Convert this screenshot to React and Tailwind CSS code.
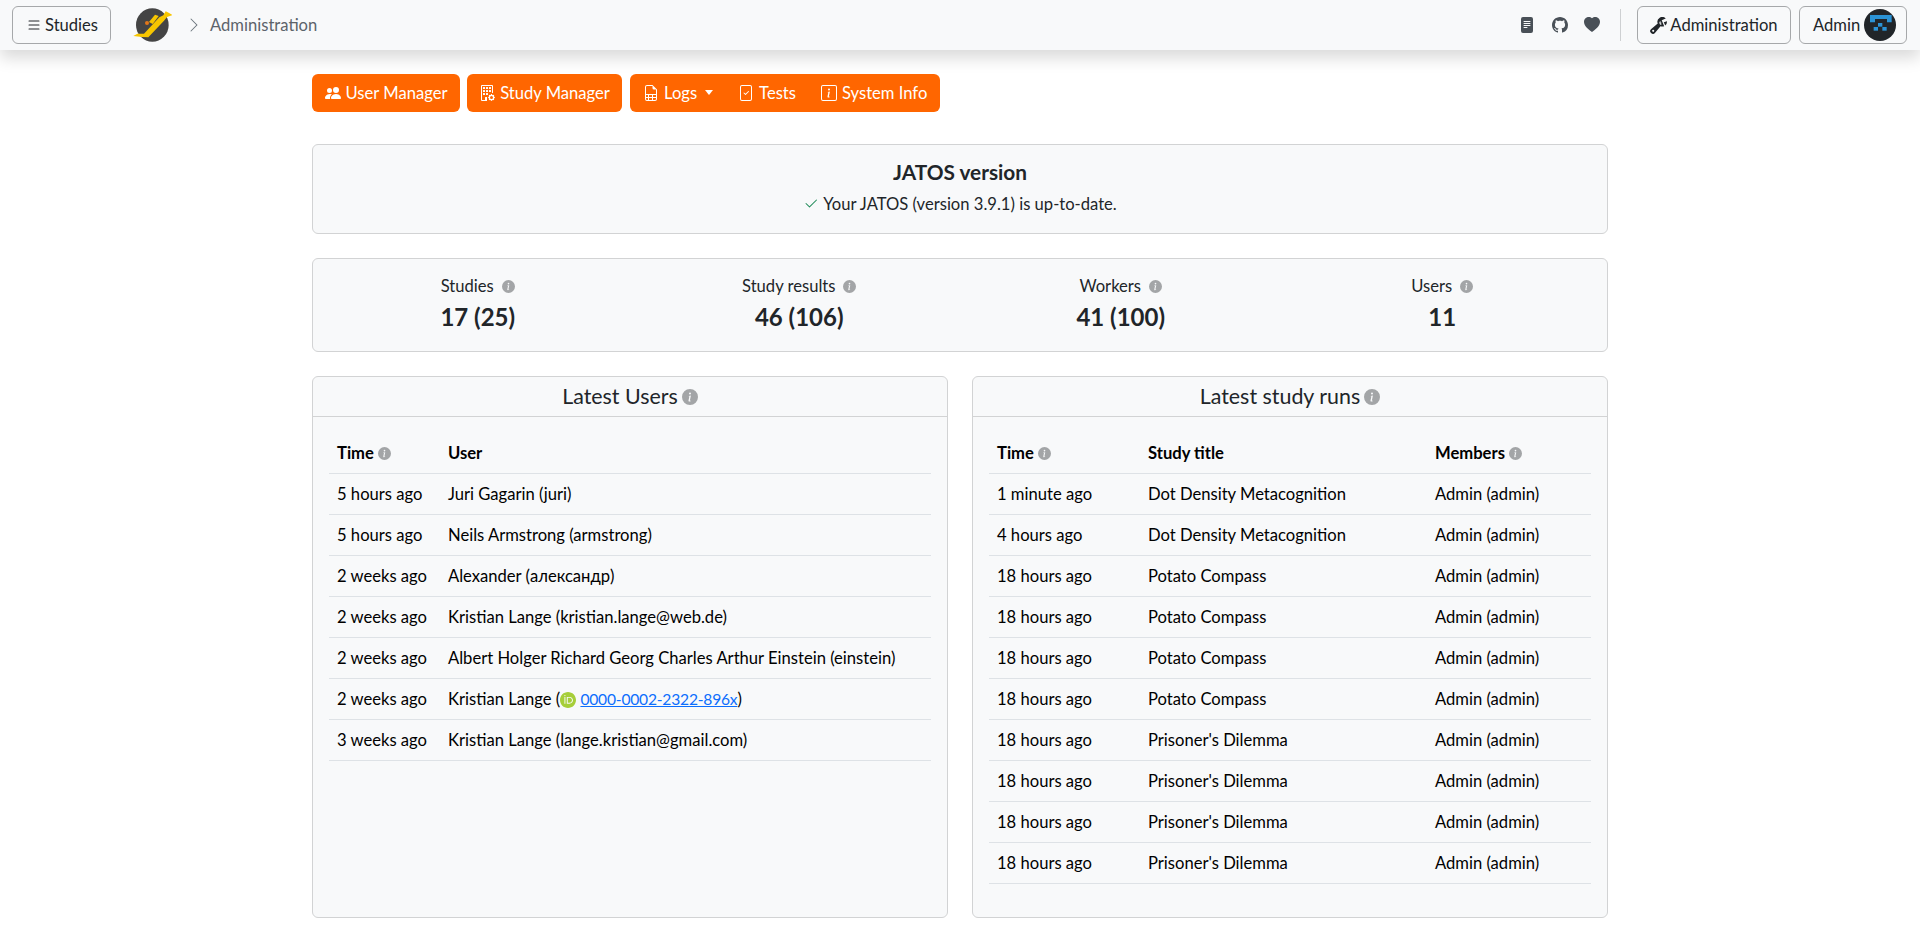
import {
  BsList,
  BsChevronRight,
  BsFileTextFill,
  BsGithub,
  BsHeartFill,
  BsWrenchAdjustable,
  BsPeopleFill,
  BsBuildingGear,
  BsFileEarmarkSpreadsheet,
  BsFileCheck,
  BsInfoSquare,
  BsCheck2,
  BsInfoCircleFill,
} from "react-icons/bs";
import { SiOrcid } from "react-icons/si";

const users = [
  ["5 hours ago", "Juri Gagarin (juri)"],
  ["5 hours ago", "Neils Armstrong (armstrong)"],
  ["2 weeks ago", "Alexander (александр)"],
  ["2 weeks ago", "Kristian Lange (kristian.lange@web.de)"],
  ["2 weeks ago", "Albert Holger Richard Georg Charles Arthur Einstein (einstein)"],
  [
    "2 weeks ago",
    <>
      Kristian Lange (
      <SiOrcid className="inline-block text-[16px] text-[#a6ce39] align-[-3px]" />{" "}
      <a href="#" className="text-[#0d6efd] underline text-[15.6px] tracking-[-0.2px]">
        0000-0002-2322-896x
      </a>
      )
    </>,
  ],
  ["3 weeks ago", "Kristian Lange (lange.kristian@gmail.com)"],
];

const runs = [
  ["1 minute ago", "Dot Density Metacognition"],
  ["4 hours ago", "Dot Density Metacognition"],
  ["18 hours ago", "Potato Compass"],
  ["18 hours ago", "Potato Compass"],
  ["18 hours ago", "Potato Compass"],
  ["18 hours ago", "Potato Compass"],
  ["18 hours ago", "Prisoner's Dilemma"],
  ["18 hours ago", "Prisoner's Dilemma"],
  ["18 hours ago", "Prisoner's Dilemma"],
  ["18 hours ago", "Prisoner's Dilemma"],
];

function Info({ className }) {
  return <BsInfoCircleFill className={"inline-block text-[#a3a5a7] " + className} />;
}

function Logo() {
  return (
    <svg viewBox="36 15 120 120" className="w-10 h-10 ml-[21px]">
      <ellipse cx="97" cy="75" rx="49" ry="50" fill="#444444" />
      <path
        d="M40 108 L52 101 L72 101 L118 52 L130 46 L137 34 L146 38 L157 45 L141 51 L132 62 L85 112 L66 111 Z"
        fill="#f7c600"
      />
      <path d="M87 66 L105 44 L116 48 L98 72 Z" fill="#f7c600" />
      <circle cx="81" cy="69" r="6" fill="#e2761b" />
    </svg>
  );
}

function Avatar() {
  return (
    <svg viewBox="39 27 96 96" className="w-8 h-8 ml-1">
      <circle cx="87" cy="75" r="48" fill="#212529" />
      <path d="M57 45 H122 V67 H108 V57 H72 V67 H57 Z" fill="#2b93d6" />
      <rect x="81" y="69" width="13" height="11" fill="#2b93d6" />
      <rect x="68" y="81" width="13" height="11" fill="#2b93d6" />
      <rect x="94" y="81" width="13" height="11" fill="#2b93d6" />
    </svg>
  );
}

function NavButton({ className, children }) {
  return (
    <button className={"h-[38px] shrink-0 flex items-center rounded-md border border-[#a6a8aa] text-[#212529] " + className}>
      {children}
    </button>
  );
}

function Navbar() {
  return (
    <header className="relative z-10 h-[50px] flex items-center bg-[#f8f9fa] shadow-[0_8px_16px_rgba(0,0,0,0.15)] pl-3 pr-[13px]">
      <NavButton className="w-[99px] pl-[13px]">
        <BsList className="text-[16px] mr-[3px]" />
        Studies
      </NavButton>
      <Logo />
      <BsChevronRight className="text-[16px] text-[#6c757d] ml-[14px]" />
      <span className="ml-2 text-[#5c636a]">Administration</span>
      <div className="ml-auto flex items-center text-[#495057]">
        <BsFileTextFill className="text-[16px]" />
        <BsGithub className="text-[16px] ml-[17px]" />
        <BsHeartFill className="text-[16px] ml-[16px]" />
        <div className="w-px h-8 bg-[#ced0d2] ml-5 mr-4" />
      </div>
      <NavButton className="w-[154px] justify-center">
        <BsWrenchAdjustable className="text-[17px] mr-[3px]" />
        Administration
      </NavButton>
      <NavButton className="w-[108px] ml-2 pl-[13px]">
        Admin
        <Avatar />
      </NavButton>
    </header>
  );
}

function ActionButton({ icon, children, className }) {
  return (
    <span className={"flex items-center gap-[5px] whitespace-nowrap " + (className || "")}>
      {icon}
      {children}
    </span>
  );
}

function Actions() {
  return (
    <div className="flex text-white h-[38px]">
      <div className="w-[148px] rounded-md bg-[#ff6600] flex items-center justify-center">
        <ActionButton icon={<BsPeopleFill className="text-[16px]" />}>User Manager</ActionButton>
      </div>
      <div className="w-[155px] ml-[7px] rounded-md bg-[#ff6600] flex items-center justify-center">
        <ActionButton icon={<BsBuildingGear className="text-[16px]" />}>Study Manager</ActionButton>
      </div>
      <div className="w-[310px] ml-2 rounded-md bg-[#ff6600] flex items-center pl-[13px]">
        <ActionButton icon={<BsFileEarmarkSpreadsheet className="text-[16px]" />}>
          Logs
          <span className="ml-[3px] border-x-[4px] border-t-[5px] border-x-transparent border-t-white" />
        </ActionButton>
        <ActionButton className="ml-[25px]" icon={<BsFileCheck className="text-[16px]" />}>
          Tests
        </ActionButton>
        <ActionButton className="ml-[25px]" icon={<BsInfoSquare className="text-[16px]" />}>
          System Info
        </ActionButton>
      </div>
    </div>
  );
}

function Stat({ label, value, info = true }) {
  return (
    <div className="flex flex-col items-center">
      <div className="text-[#212529] leading-6">
        {label}
        {info && <Info className="text-[13px] ml-2 align-[-1px]" />}
      </div>
      <div className="text-2xl font-bold text-[#212529] leading-[30px] mt-1">{value}</div>
    </div>
  );
}

function Panel({ title, children }) {
  return (
    <section className="h-[542px] rounded-md border border-[#d2d3d4] bg-[#f8f9fa]">
      <h2 className="h-10 border-b border-[#d2d3d4] flex items-center justify-center text-[21.4px] text-[#212529] gap-1">
        {title}
        <Info className="text-[16px]" />
      </h2>
      <div className="p-4">{children}</div>
    </section>
  );
}

function Th({ className, children }) {
  return <th className={"h-[41px] px-2 text-left font-bold border-b border-[#dee2e6] " + (className || "")}>{children}</th>;
}

function Td({ children }) {
  return <td className="h-[41px] px-2 border-b border-[#dee2e6] whitespace-nowrap">{children}</td>;
}

export default function App() {
  return (
    <div className="min-h-screen bg-white font-['Lato','Noto_Sans',sans-serif] text-[16.6px]">
      <Navbar />
      <main className="w-[1296px] mx-auto pt-6">
        <Actions />

        <section className="mt-8 h-[90px] rounded-md border border-[#d2d3d4] bg-[#f8f9fa] flex flex-col items-center pt-[15px]">
          <h1 className="text-[20.8px] font-bold text-[#212529] leading-6">JATOS version</h1>
          <p className="mt-2 text-[#212529] leading-6 flex items-center gap-1">
            <BsCheck2 className="text-[#198754] text-[16px]" />
            Your JATOS (version 3.9.1) is up-to-date.
          </p>
        </section>

        <section className="mt-6 h-[94px] rounded-md border border-[#d2d3d4] bg-[#f8f9fa] grid grid-cols-4 px-1 pt-[15px]">
          <Stat label="Studies" value="17 (25)" />
          <Stat label="Study results" value="46 (106)" />
          <Stat label="Workers" value="41 (100)" />
          <Stat label="Users" value="11" />
        </section>

        <div className="mt-6 grid grid-cols-2 gap-6">
          <Panel title="Latest Users">
            <table className="w-full table-fixed border-separate border-spacing-0 text-black">
              <thead>
                <tr>
                  <Th className="w-[111px]">
                    Time <Info className="text-[13px] align-[-1px]" />
                  </Th>
                  <Th>User</Th>
                </tr>
              </thead>
              <tbody>
                {users.map((row, i) => (
                  <tr key={i}>
                    <Td>{row[0]}</Td>
                    <Td>{row[1]}</Td>
                  </tr>
                ))}
              </tbody>
            </table>
          </Panel>

          <Panel title="Latest study runs">
            <table className="w-full table-fixed border-separate border-spacing-0 text-black">
              <thead>
                <tr>
                  <Th className="w-[151px]">
                    Time <Info className="text-[13px] align-[-1px]" />
                  </Th>
                  <Th className="w-[287px]">Study title</Th>
                  <Th>
                    Members <Info className="text-[13px] align-[-1px]" />
                  </Th>
                </tr>
              </thead>
              <tbody>
                {runs.map((row, i) => (
                  <tr key={i}>
                    <Td>{row[0]}</Td>
                    <Td>{row[1]}</Td>
                    <Td>Admin (admin)</Td>
                  </tr>
                ))}
              </tbody>
            </table>
          </Panel>
        </div>
      </main>
    </div>
  );
}
